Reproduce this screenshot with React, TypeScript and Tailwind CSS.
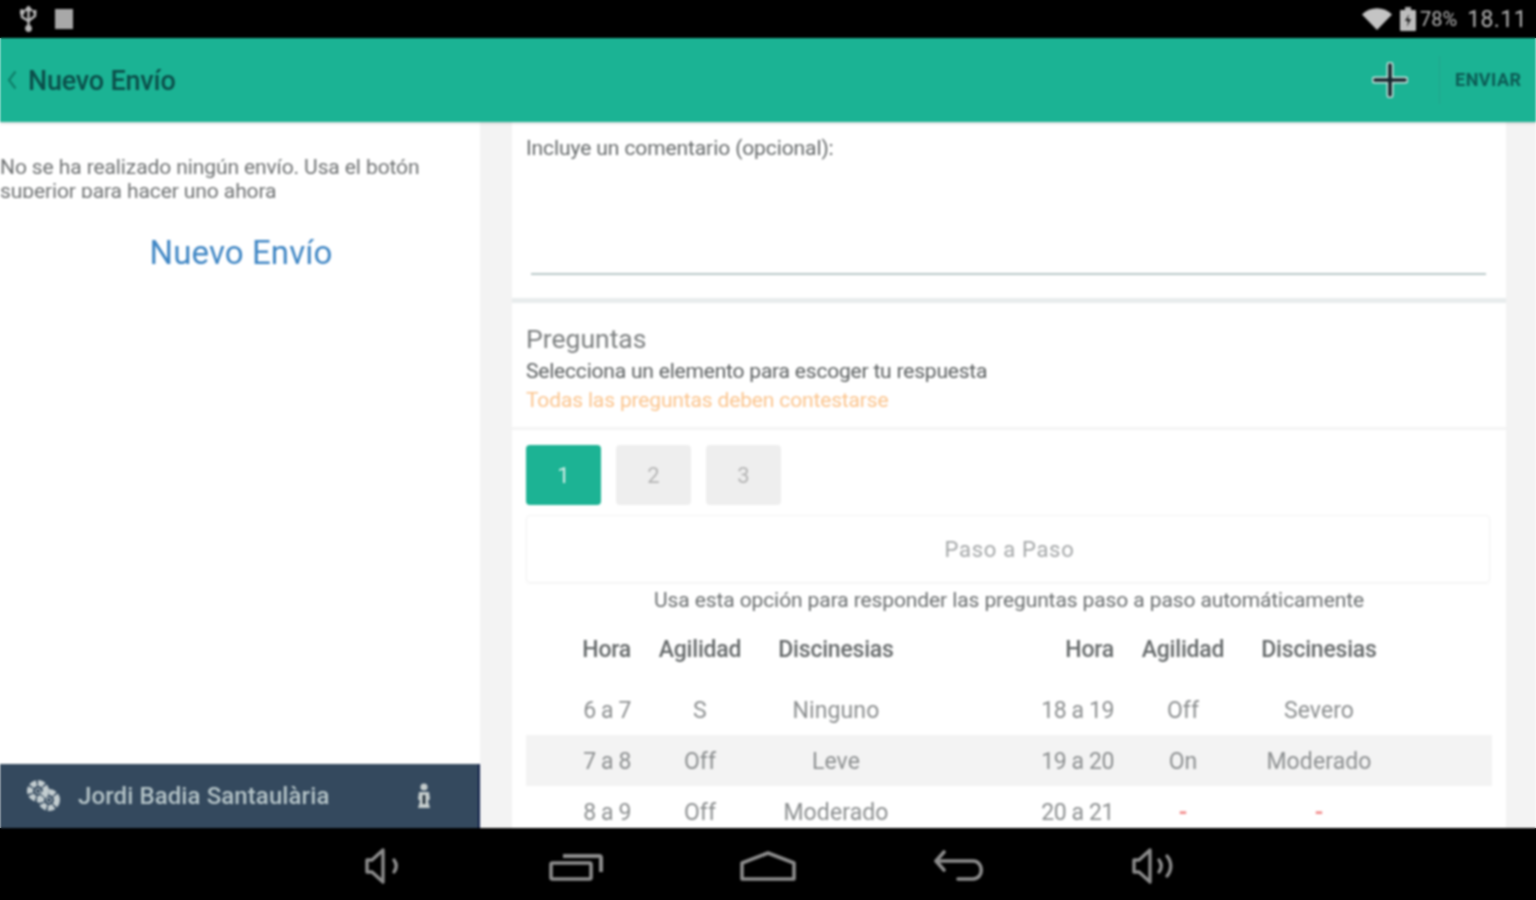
const font = { fontFamily: "Roboto, 'Noto Sans', sans-serif" };

const rows = [
  ["6 a 7", "S", "Ninguno", "18 a 19", "Off", "Severo"],
  ["7 a 8", "Off", "Leve", "19 a 20", "On", "Moderado"],
  ["8 a 9", "Off", "Moderado", "20 a 21", "-", "-"],
];

function Cell({ value, hora, header }: { value: string; hora?: boolean; header?: boolean }) {
  const isDash = value === "-";
  return (
    <div
      className={`flex items-center ${hora ? "justify-end pr-[9px]" : "justify-center"} ${
        header ? "pt-[1px]" : "pt-[3px]"
      } ${
        isDash
          ? "font-bold text-[#f28b8b]"
          : header
            ? "font-medium tracking-[-0.2px] text-[#666a6b]"
            : hora
              ? "tracking-[-0.4px] text-[#8c8f90]"
              : "tracking-[0.1px] text-[#8c8f90]"
      } text-[23px]`}
    >
      {value}
    </div>
  );
}

function TableRow({ cells, header, shaded }: { cells: string[]; header?: boolean; shaded?: boolean }) {
  return (
    <div
      className={`grid shrink-0 grid-cols-[114px_120px_152px_97px_114px_120px_152px_97px] ${
        header ? "h-[50px] mb-[9px]" : "h-[51px]"
      } ${shaded ? "bg-[#f3f3f3]" : ""}`}
    >
      <Cell value={cells[0]} hora header={header} />
      <Cell value={cells[1]} header={header} />
      <Cell value={cells[2]} header={header} />
      <div />
      <Cell value={cells[3]} hora header={header} />
      <Cell value={cells[4]} header={header} />
      <Cell value={cells[5]} header={header} />
      <div />
    </div>
  );
}

function StatusBar() {
  return (
    <div className="flex h-[38px] shrink-0 items-center justify-between bg-black pl-[20px] pr-[9px] text-[#b4b4b4]">
      <div className="flex items-center gap-[18px]">
        <svg width="17" height="26" viewBox="0 0 17 26" fill="none" stroke="#b8b8b8" strokeWidth="2.4">
          <path d="M8.5 2v22" />
          <path d="M2 7v4l6.5 4 6.5-5V7" />
          <path d="M6 4l2.5-3L11 4z" fill="#b8b8b8" />
          <circle cx="2" cy="6" r="1.6" fill="#b8b8b8" />
          <rect x="13" y="4" width="3.4" height="3.4" fill="#b8b8b8" stroke="none" />
          <circle cx="8.5" cy="22.5" r="2.2" fill="#b8b8b8" />
        </svg>
        <div className="h-[20px] w-[18px] bg-[#a8a8a8]" />
      </div>
      <div className="flex items-center">
        <svg width="30" height="22" viewBox="0 0 30 22" className="mr-[8px]">
          <path d="M0 6.5C8-2 22-2 30 6.5L15 22z" fill="#c4c4c4" />
        </svg>
        <svg width="16" height="24" viewBox="0 0 16 24" className="mr-[4px]">
          <rect x="5" y="0" width="6" height="3" fill="#b0b0b0" />
          <rect x="0" y="3" width="16" height="21" rx="1" fill="#bdbdbd" />
          <path d="M9 7l-4 7h3l-1 6 4-8H8z" fill="#1a1a1a" />
        </svg>
        <span className="mr-[10px] text-[20px] leading-none" style={font}>78%</span>
        <span className="text-[23px] leading-none tracking-[0.4px]" style={font}>18.11</span>
      </div>
    </div>
  );
}

function Header() {
  return (
    <div className="z-10 flex h-[84px] shrink-0 items-center justify-between bg-[#1bb394] pl-[7px] shadow-[0_1px_3px_rgba(0,0,0,0.2)]">
      <div className="flex items-center gap-[11px]">
        <svg width="10" height="20" viewBox="0 0 10 20" fill="none" stroke="#0f7f6a" strokeWidth="2.2">
          <path d="M8.5 1.5L2 10l6.5 8.5" />
        </svg>
        <span className="pt-[3px] text-[27px] font-medium leading-none tracking-[-0.2px] text-[#0b4f4a]">Nuevo Envío</span>
      </div>
      <div className="flex h-full items-center">
        <svg width="36" height="36" viewBox="0 0 36 36" fill="none" className="mr-[31px]">
          <path d="M18 3v30M3 18h30" stroke="#c4e0d9" strokeWidth="7" strokeLinecap="round" />
          <path d="M18 3v30M3 18h30" stroke="#14222a" strokeWidth="3.6" strokeLinecap="round" />
        </svg>
        <div className="h-[48px] w-px bg-[#22a48b]" />
        <span className="w-[96px] pb-[2px] pl-[15px] text-[18px] font-bold tracking-[0.5px] text-[#0c5c55]">ENVIAR</span>
      </div>
    </div>
  );
}

function Sidebar() {
  return (
    <div className="flex w-[480px] shrink-0 flex-col justify-between bg-white">
      <div>
        <div className="mt-[33px] h-[43px] w-[430px] overflow-hidden text-[21px] leading-[24px] tracking-[-0.1px] text-[#6f7273]">
          No se ha realizado ningún envío. Usa el botón superior para hacer uno ahora
        </div>
        <div className="mt-[35px] pl-[2px] text-center text-[33px] leading-[40px] tracking-[0.1px] text-[#3f86c4]">Nuevo Envío</div>
      </div>
      <div className="flex h-[64px] items-center justify-between border-r-2 border-[#10204a] bg-[#34495e] pl-[26px] pr-[46px]">
        <div className="flex items-center gap-[16px]">
          <svg width="36" height="34" viewBox="0 0 36 34" fill="none" stroke="#c3cdd0">
            <circle cx="12" cy="12" r="8" strokeWidth="6" strokeDasharray="6 1.5" />
            <circle cx="12" cy="12" r="2.5" fill="#34495e" strokeWidth="1" />
            <circle cx="23" cy="21" r="8" strokeWidth="6" strokeDasharray="6 1.5" />
            <circle cx="23" cy="21" r="2.5" fill="#34495e" strokeWidth="1" />
          </svg>
          <span className="text-[24px] font-medium leading-none tracking-[0.1px] text-[#b4c3c7]">
            Jordi Badia Santaulària
          </span>
        </div>
        <svg width="16" height="26" viewBox="0 0 16 26" fill="#c4cccc">
          <circle cx="8" cy="4" r="3.6" />
          <path d="M3 9h10l1 7-2 2 2 7H2l2-7-2-2z" />
          <path d="M8 12v9" stroke="#1a2630" strokeWidth="2.5" />
        </svg>
      </div>
    </div>
  );
}

function Main() {
  return (
    <div className="flex w-[994px] shrink-0 flex-col overflow-hidden bg-white">
      <div className="h-[181px] shrink-0 border-b-[5px] border-[#e8eced] px-[14px] pt-[13px]">
        <div className="text-[21px] leading-[26px] tracking-[-0.1px] text-[#666a6b]">Incluye un comentario (opcional):</div>
        <div className="ml-[5px] mt-[112px] h-[2px] w-[955px] bg-[#b9c8c8]" />
      </div>
      <div className="h-[127px] shrink-0 border-b-[3px] border-[#f4f4f4] px-[14px] pt-[20px]">
        <div className="text-[26.5px] leading-[32px] text-[#7d8081]">Preguntas</div>
        <div className="mt-[3px] text-[21px] leading-[26px] tracking-[-0.2px] text-[#5c6061]">
          Selecciona un elemento para escoger tu respuesta
        </div>
        <div className="mt-[3px] text-[21px] leading-[26px] tracking-[-0.15px] text-[#fbc48d]">
          Todas las preguntas deben contestarse
        </div>
      </div>
      <div className="flex shrink-0 flex-col pl-[14px] pr-[14px] pt-[15px]">
        <div className="flex gap-[15px]">
          <div className="flex h-[60px] w-[75px] items-center justify-center rounded-[4px] bg-[#1cb394] text-[22px] text-[#d8f0ea]">1</div>
          <div className="flex h-[60px] w-[75px] items-center justify-center rounded-[4px] bg-[#eeeeee] text-[22px] text-[#b4b4b4]">2</div>
          <div className="flex h-[60px] w-[75px] items-center justify-center rounded-[4px] bg-[#eeeeee] text-[22px] text-[#b4b4b4]">3</div>
        </div>
        <div className="mt-[10px] flex h-[68px] w-[964px] items-center justify-center rounded-[4px] border border-[#f3f3f3] pl-[3px] text-[22px] tracking-[0.7px] text-[#a4a7a8] shadow-[0_1px_2px_rgba(0,0,0,0.04)]">
          Paso a Paso
        </div>
        <div className="mt-[4px] h-[26px] w-[966px] text-center text-[21px] leading-[26px] tracking-[-0.1px] text-[#6b6f70]">
          Usa esta opción para responder las preguntas paso a paso automáticamente
        </div>
        <div className="mt-[12px] flex flex-col">
          <TableRow header cells={["Hora", "Agilidad", "Discinesias", "Hora", "Agilidad", "Discinesias"]} />
          {rows.map((row, i) => (
            <TableRow key={row[0]} cells={row} shaded={i === 1} />
          ))}
        </div>
      </div>
    </div>
  );
}

function NavBar() {
  return (
    <div className="flex h-[72px] shrink-0 items-center justify-center bg-black pt-[4px]">
      <div className="flex w-[192px] justify-center pr-[3px]">
        <svg width="38" height="38" viewBox="0 0 38 38" fill="none" stroke="#8c8c8c" strokeWidth="3.4" strokeLinejoin="round" strokeLinecap="round">
          <path d="M3 13v12h5l11 10V3L8 13z" />
          <path d="M30 13c3 4 3 8 0 12" />
        </svg>
      </div>
      <div className="flex w-[192px] justify-center">
        <svg width="54" height="30" viewBox="0 0 54 30" fill="none" stroke="#8c8c8c" strokeWidth="3.6">
          <rect x="2" y="12" width="40" height="16" rx="1.5" />
          <path d="M14 5h36a2 2 0 0 1 2 2v14" strokeWidth="4" />
        </svg>
      </div>
      <div className="flex w-[192px] justify-center">
        <svg width="56" height="30" viewBox="0 0 56 30" fill="none" stroke="#8c8c8c" strokeWidth="3.6" strokeLinejoin="round">
          <path d="M2 12L28 2l26 10v16H2z" />
        </svg>
      </div>
      <div className="flex w-[192px] justify-center">
        <svg width="52" height="32" viewBox="0 0 52 32" fill="none" stroke="#8c8c8c" strokeWidth="3.6" strokeLinecap="round" strokeLinejoin="round">
          <path d="M10 2L2 11l8 9" />
          <path d="M3 11h36c11 0 11 18 0 18H24" />
        </svg>
      </div>
      <div className="flex w-[192px] justify-center pl-[4px]">
        <svg width="44" height="38" viewBox="0 0 44 38" fill="none" stroke="#8c8c8c" strokeWidth="3.4" strokeLinejoin="round" strokeLinecap="round">
          <path d="M2 13v12h5l11 10V3L7 13z" />
          <path d="M27 13c3 4 3 8 0 12" />
          <path d="M35 9c5 6 5 14 0 20" />
        </svg>
      </div>
    </div>
  );
}

export default function App() {
  return (
    <div className="h-[900px] w-[1536px] overflow-hidden bg-[linear-gradient(#000_0_38px,#fff_38px_828px,#000_828px)]">
      <div className="flex h-[900px] w-[1536px] flex-col overflow-hidden bg-[#f3f3f3] blur-[1px]" style={font}>
        <StatusBar />
        <Header />
        <div className="flex h-[706px] gap-[32px] overflow-hidden">
          <Sidebar />
          <Main />
        </div>
        <NavBar />
      </div>
    </div>
  );
}
